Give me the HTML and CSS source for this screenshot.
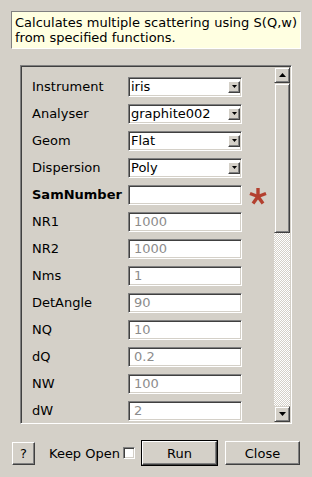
FILE: index.html
```html
<!DOCTYPE html>
<html>
<head>
<meta charset="utf-8">
<link rel="stylesheet" href="styles.css">
</head>
<body>
<div class="dialog">
  <div class="desc">Calculates multiple scattering using S(Q,w) from specified functions.</div>
  <div class="frame">
    <div class="content">
      <div class="row"><span class="label">Instrument</span><div class="combo"><span class="val">iris</span><span class="drop"><svg width="7" height="4" viewBox="0 0 7 4"><path d="M0 0h7L3.5 4z" fill="#000"/></svg></span></div></div>
      <div class="row"><span class="label">Analyser</span><div class="combo"><span class="val">graphite002</span><span class="drop"><svg width="7" height="4" viewBox="0 0 7 4"><path d="M0 0h7L3.5 4z" fill="#000"/></svg></span></div></div>
      <div class="row"><span class="label">Geom</span><div class="combo"><span class="val">Flat</span><span class="drop"><svg width="7" height="4" viewBox="0 0 7 4"><path d="M0 0h7L3.5 4z" fill="#000"/></svg></span></div></div>
      <div class="row"><span class="label">Dispersion</span><div class="combo"><span class="val">Poly</span><span class="drop"><svg width="7" height="4" viewBox="0 0 7 4"><path d="M0 0h7L3.5 4z" fill="#000"/></svg></span></div></div>
      <div class="row"><span class="label bold">SamNumber</span><div class="field"></div><svg class="req" width="18" height="18" viewBox="0 0 18 18"><g stroke="#b3402f" stroke-width="3.4" stroke-linecap="butt"><line x1="9" y1="9.5" x2="9" y2="1"/><line x1="9" y1="9.5" x2="17" y2="6.5"/><line x1="9" y1="9.5" x2="1" y2="6.5"/><line x1="9" y1="9.5" x2="14" y2="16.5"/><line x1="9" y1="9.5" x2="4" y2="16.5"/></g></svg></div>
      <div class="row"><span class="label">NR1</span><div class="field ph">1000</div></div>
      <div class="row"><span class="label">NR2</span><div class="field ph">1000</div></div>
      <div class="row"><span class="label">Nms</span><div class="field ph">1</div></div>
      <div class="row"><span class="label">DetAngle</span><div class="field ph">90</div></div>
      <div class="row"><span class="label">NQ</span><div class="field ph">10</div></div>
      <div class="row"><span class="label">dQ</span><div class="field ph">0.2</div></div>
      <div class="row"><span class="label">NW</span><div class="field ph">100</div></div>
      <div class="row"><span class="label">dW</span><div class="field ph">2</div></div>
    </div>
    <div class="scrollbar">
      <div class="sbtn"><svg width="7" height="4" viewBox="0 0 7 4"><path d="M3.5 0L7 4H0z" fill="#000"/></svg></div>
      <div class="thumb"></div>
      <div class="trough"></div>
      <div class="sbtn"><svg width="7" height="4" viewBox="0 0 7 4"><path d="M0 0h7L3.5 4z" fill="#000"/></svg></div>
    </div>
  </div>
  <div class="buttons">
    <div class="btn help">?</div>
    <span class="keep">Keep Open</span>
    <span class="check"></span>
    <div class="default"><div class="btn wide">Run</div></div>
    <div class="btn wide">Close</div>
  </div>
</div>
</body>
</html>
```
FILE: styles.css
```css
html, body {
  margin: 0;
  padding: 0;
  background: #d4d0c8;
}
body {
  font-family: "DejaVu Sans", sans-serif;
  font-size: 13px;
  color: #000;
}
.dialog {
  width: 312px;
  height: 477px;
  display: flex;
  flex-direction: column;
  overflow: hidden;
}
.desc {
  margin: 11px 11px 0 11px;
  padding: 3px 3px 3px 3px;
  background: #ffffe1;
  border: 1px solid;
  border-color: #808080 #ffffff #ffffff #808080;
  line-height: 15px;
  height: 30px;
  text-align: justify;
}
.frame {
  margin: 16px 20px 0 20px;
  height: 359px;
  box-sizing: border-box;
  border: 1px solid;
  border-color: #808080 #ffffff #ffffff #808080;
  box-shadow: inset 1px 1px #404040, inset -1px -1px #d4d0c8;
  padding: 1px;
  display: flex;
}
.content {
  flex: 1;
  overflow: hidden;
  padding: 10px 0 0 10px;
  display: flex;
  flex-direction: column;
  gap: 7px;
}
.row {
  display: flex;
  align-items: center;
  height: 20px;
  flex: none;
}
.label {
  width: 96px;
  flex: none;
  line-height: 20px;
}
.bold {
  font-weight: bold;
}
.field, .combo {
  width: 114px;
  height: 20px;
  box-sizing: border-box;
  background: #fff;
  border: 1px solid;
  border-color: #808080 #ffffff #ffffff #808080;
  box-shadow: inset 1px 1px #404040, inset -1px -1px #d4d0c8;
  line-height: 18px;
  padding: 0 0 0 5px;
  flex: none;
}
.ph {
  color: #8c8c8c;
}
.combo {
  display: flex;
  align-items: center;
  padding-right: 1px;
  padding-left: 2px;
}
.val {
  flex: 1;
}
.drop {
  width: 12px;
  height: 12px;
  box-sizing: border-box;
  background: #d4d0c8;
  border: 1px solid;
  border-color: #ffffff #404040 #404040 #ffffff;
  box-shadow: inset -1px -1px #808080;
  display: flex;
  align-items: center;
  justify-content: center;
  padding-bottom: 1px;
}
.drop svg {
  width: 5px;
  height: 3px;
}
.req {
  margin-left: 7px;
  margin-top: 1px;
}
.scrollbar {
  width: 16px;
  flex: none;
  display: flex;
  flex-direction: column;
}
.sbtn, .thumb {
  box-sizing: border-box;
  background: #d4d0c8;
  border: 1px solid;
  border-color: #d4d0c8 #404040 #404040 #d4d0c8;
  box-shadow: inset 1px 1px #ffffff, inset -1px -1px #808080;
}
.sbtn {
  height: 16px;
  display: flex;
  align-items: center;
  justify-content: center;
}
.thumb {
  height: 150px;
}
.trough {
  flex: 1;
  background: repeating-conic-gradient(#ffffff 0 25%, #d4d0c8 0 50%) 0 0 / 2px 2px;
}
.buttons {
  display: flex;
  align-items: center;
  height: 26px;
  margin-top: 16px;
  padding: 0 12px 0 12px;
}
.btn {
  box-sizing: border-box;
  height: 24px;
  background: #d4d0c8;
  border: 1px solid;
  border-color: #ffffff #404040 #404040 #ffffff;
  box-shadow: inset -1px -1px #808080;
  display: flex;
  align-items: center;
  justify-content: center;
}
.help {
  width: 23px;
  height: 23px;
}
.keep {
  margin-left: 14px;
}
.check {
  width: 12px;
  height: 12px;
  box-sizing: border-box;
  margin-left: 3px;
  background: #fff;
  border: 1px solid;
  border-color: #808080 #ffffff #ffffff #808080;
  box-shadow: inset 1px 1px #404040, inset -1px -1px #d4d0c8;
}
.default {
  margin-left: auto;
  border: 1px solid #000;
}
.wide {
  width: 75px;
}
.default + .btn {
  margin-left: 7px;
}
```
